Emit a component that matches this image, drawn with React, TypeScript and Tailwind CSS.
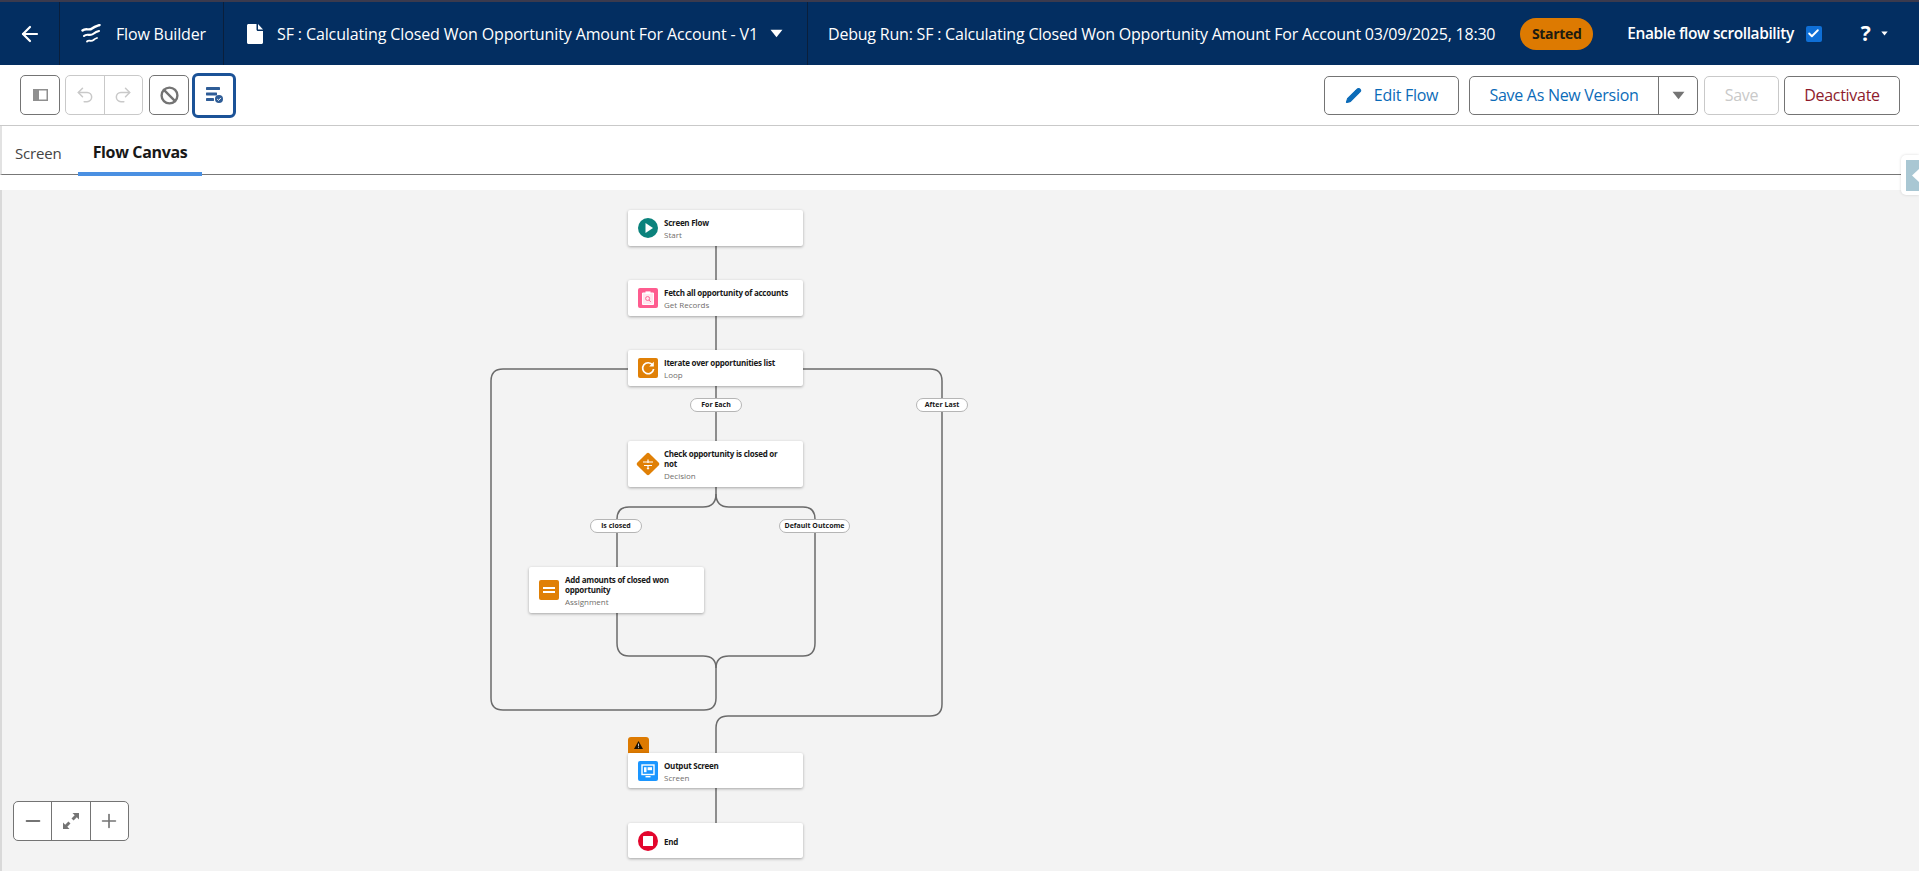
import { ArrowLeft, Ban, Pencil, Redo2, Undo2, Check, Plus, Minus } from 'lucide-react'
import type { ReactNode } from 'react'

function FlowLogo() {
  return (
    <svg width="20" height="20" viewBox="0 0 20 20" fill="none" stroke="white" strokeLinecap="round">
      <path d="M1.5 6.5C5 3.5 8 7 11 4.5C13.5 2.5 15.5 2 18.5 1" strokeWidth="2.4" />
      <path d="M3 12C6 9 9 12.5 12 10C14 8.5 15.5 7.5 18 7" strokeWidth="2.1" />
      <path d="M6 17.5C8 15.5 10 18 12.5 16C13.5 15 14.5 14.5 16 14" strokeWidth="1.8" />
    </svg>
  )
}

function FileIcon() {
  return (
    <svg width="16" height="20" viewBox="0 0 16 20" fill="white">
      <path d="M1.5 0H9.5V5.5C9.5 6.3 10.2 7 11 7H16V18.5C16 19.3 15.3 20 14.5 20H1.5C0.7 20 0 19.3 0 18.5V1.5C0 0.7 0.7 0 1.5 0Z" />
      <path d="M11 0L16 5.5H11Z" />
    </svg>
  )
}

function SidebarIcon() {
  return (
    <svg width="15" height="12" viewBox="0 0 15 12">
      <rect x="0" y="0" width="15" height="12" fill="#8f8f8f" />
      <rect x="6" y="1.5" width="7.5" height="9" fill="white" />
    </svg>
  )
}

function ChecklistIcon() {
  return (
    <svg width="17" height="16" viewBox="0 0 17 16" fill="#2f5d97">
      <rect x="0" y="0" width="14" height="3" rx="0.4" />
      <rect x="0" y="5.5" width="11" height="3" rx="0.4" />
      <rect x="0" y="11" width="8" height="3" rx="0.4" />
      <circle cx="13" cy="12" r="4" />
      <path d="M11.2 12.1L12.6 13.4L14.9 10.9" fill="none" stroke="white" strokeWidth="1" />
    </svg>
  )
}

function Caret({ className }: { className: string }) {
  return (
    <svg viewBox="0 0 12 8" className={className} fill="currentColor">
      <path d="M0.5 0.5H11.5L6 7.5Z" />
    </svg>
  )
}

function ToolButton({ children, className }: { children: ReactNode; className: string }) {
  return (
    <div className={`flex items-center justify-center bg-white ${className}`}>
      {children}
    </div>
  )
}

function FlowCard({ pos, title, sub, icon }: { pos: string; title: string; sub?: string; icon: ReactNode }) {
  return (
    <div className={`absolute flex items-center rounded-[2px] bg-white pl-[10px] pr-3 shadow-[0_1px_3px_rgba(0,0,0,0.32)] ${pos}`}>
      <div className="flex w-5 shrink-0 justify-center">{icon}</div>
      <div className="ml-[6px] min-w-0 pt-[2px]">
        <div className="text-[8px] font-bold leading-[10px] tracking-[-0.25px] text-[#181818]">{title}</div>
        {sub && <div className="mt-[2px] text-[8px] leading-[10px] text-[#706e6b]">{sub}</div>}
      </div>
    </div>
  )
}

function Pill({ pos, label }: { pos: string; label: string }) {
  return (
    <div className={`absolute flex h-[14px] items-center justify-center rounded-full border border-[#b5b5b5] bg-white text-[7px] font-bold text-[#181818] ${pos}`}>
      {label}
    </div>
  )
}

const startIcon = (
  <svg width="20" height="20" viewBox="0 0 20 20">
    <circle cx="10" cy="10" r="10" fill="#0b827c" />
    <path d="M7.5 5L15 10L7.5 15Z" fill="white" />
  </svg>
)

const getRecordsIcon = (
  <svg width="20" height="20" viewBox="0 0 20 20">
    <rect width="20" height="20" rx="2" fill="#fe5c8f" />
    <path d="M4.5 5H15.5V16.5H4.5Z" fill="#ffe6ee" stroke="white" strokeWidth="1" />
    <rect x="7.5" y="3.4" width="5" height="2.6" fill="white" />
    <circle cx="9.6" cy="10.5" r="2" fill="none" stroke="#fe5c8f" strokeWidth="0.9" />
    <path d="M11 12L12.8 14" stroke="#fe5c8f" strokeWidth="0.9" />
  </svg>
)

const loopIcon = (
  <svg width="20" height="20" viewBox="0 0 20 20">
    <rect width="20" height="20" rx="2" fill="#e08006" />
    <path d="M14.6 7A5.5 5.5 0 1 0 15.6 11" fill="none" stroke="white" strokeWidth="1.7" />
    <path d="M15.8 3.8V8.4H11.2Z" fill="white" />
  </svg>
)

const decisionIcon = (
  <svg width="24" height="24" viewBox="0 0 24 24" className="shrink-0">
    <rect x="3.5" y="3.5" width="17" height="17" rx="2" transform="rotate(45 12 12)" fill="#e08006" />
    <path d="M7 10H17M8 13.5H16M12 7.5V11M12 14V16" stroke="white" strokeWidth="1.2" fill="none" />
    <path d="M10.5 16H13.5L12 17.8Z" fill="white" />
  </svg>
)

const assignIcon = (
  <svg width="20" height="20" viewBox="0 0 20 20">
    <rect width="20" height="20" rx="2" fill="#e08006" />
    <rect x="4" y="7" width="12" height="2" fill="white" />
    <rect x="4" y="11" width="12" height="2" fill="white" />
  </svg>
)

const screenIcon = (
  <svg width="20" height="20" viewBox="0 0 20 20">
    <rect width="20" height="20" rx="2" fill="#1b96ff" />
    <rect x="4" y="4" width="12" height="9.5" fill="none" stroke="white" strokeWidth="1.4" />
    <rect x="6" y="6.2" width="2.5" height="5" fill="white" />
    <rect x="9.6" y="6.2" width="4.4" height="3" fill="white" />
    <rect x="7.5" y="15" width="5" height="1.4" fill="white" />
  </svg>
)

const endIcon = (
  <svg width="20" height="20" viewBox="0 0 20 20">
    <circle cx="10" cy="10" r="10" fill="#e3062d" />
    <rect x="5" y="5" width="10" height="10" rx="0.5" fill="white" />
  </svg>
)

function FlowEdges() {
  return (
    <svg className="absolute inset-0" width="1919" height="681" viewBox="0 190 1919 681" fill="none" stroke="#6b6b6b" strokeWidth="1.5">
      <path d="M716 246V280" />
      <path d="M716 316V350" />
      <path d="M716 386V441" />
      <path d="M628 369H503Q491 369 491 381V698Q491 710 503 710H704Q716 710 716 698V668" />
      <path d="M803 369H930Q942 369 942 381V704Q942 716 930 716H728Q716 716 716 728V753" />
      <path d="M716 487V494Q716 507 703 507H629Q617 507 617 519V567" />
      <path d="M716 494Q716 507 729 507H803Q815 507 815 519V643Q815 656 803 656H729Q716 656 716 668" />
      <path d="M617 613V643Q617 656 629 656H703Q716 656 716 668" />
      <path d="M716 788V823" />
    </svg>
  )
}

export default function App() {
  return (
    <div className="flex h-[871px] w-full flex-col overflow-hidden bg-white font-['Open_Sans',sans-serif]">
      <div className="h-[2px] shrink-0 bg-[#3b3a4d]" />

      {/* top nav */}
      <div className="flex h-[63px] shrink-0 items-stretch bg-[#032e61] text-[16px] tracking-[-0.18px] text-white">
        <div className="flex w-[60px] items-center justify-center border-r border-[#0a1f3c]">
          <ArrowLeft size={24} strokeWidth={2.2} />
        </div>
        <div className="flex w-[164px] items-center border-r border-[#0a1f3c] pl-[21px]">
          <FlowLogo />
          <span className="ml-[15px]">Flow Builder</span>
        </div>
        <div className="flex w-[584px] items-center border-r border-[#0a1f3c] pl-[23px]">
          <FileIcon />
          <span className="ml-[14px] whitespace-nowrap tracking-[-0.12px]">SF : Calculating Closed Won Opportunity Amount For Account - V1</span>
          <Caret className="ml-[12px] h-[9px] w-[13px]" />
        </div>
        <div className="flex flex-1 items-center pl-5">
          <span className="whitespace-nowrap tracking-[-0.21px]">Debug Run: SF : Calculating Closed Won Opportunity Amount For Account 03/09/2025, 18:30</span>
          <span className="ml-[25px] flex h-8 w-[73px] items-center justify-center rounded-full bg-[#dd7a01] text-[14px] font-bold tracking-[-0.3px] text-[#201b10]">Started</span>
          <span className="ml-[34px] whitespace-nowrap text-[15.5px] font-semibold tracking-[-0.4px]">Enable flow scrollability</span>
          <span className="ml-[12px] flex h-4 w-4 items-center justify-center rounded-[2px] bg-[#0f6fd6]">
            <Check size={13} strokeWidth={3.5} />
          </span>
          <span className="ml-[39px] text-[21px] font-bold leading-none">?</span>
          <Caret className="ml-[10px] h-[5px] w-[7px]" />
        </div>
      </div>

      {/* toolbar */}
      <div className="flex h-[61px] shrink-0 items-center justify-between border-b border-[#c9c9c9] pl-5 pr-[19px]">
        <div className="flex items-center">
          <ToolButton className="h-10 w-10 rounded-[5px] border border-[#747474]">
            <SidebarIcon />
          </ToolButton>
          <div className="ml-[5px] flex h-10 w-[78px] rounded-[5px] border border-[#c9c9c9] text-[#c9c9c9]">
            <div className="flex flex-1 items-center justify-center border-r border-[#c9c9c9]">
              <Undo2 size={20} strokeWidth={1.8} />
            </div>
            <div className="flex flex-1 items-center justify-center">
              <Redo2 size={20} strokeWidth={1.8} />
            </div>
          </div>
          <ToolButton className="ml-[6px] h-10 w-10 rounded-[5px] border border-[#747474] text-[#747474]">
            <Ban size={19} strokeWidth={3} />
          </ToolButton>
          <ToolButton className="ml-[3px] h-[45px] w-11 rounded-[6px] border-[3px] border-[#1b5297]">
            <ChecklistIcon />
          </ToolButton>
        </div>
        <div className="flex items-center text-[16px] tracking-[-0.28px]">
          <div className="flex h-[39px] w-[135px] items-center justify-center rounded-[5px] border border-[#747474] text-[#0b6bb8]">
            <Pencil size={17} fill="currentColor" strokeWidth={1.5} />
            <span className="ml-[12px]">Edit Flow</span>
          </div>
          <div className="ml-[10px] flex h-[39px] w-[229px] rounded-[5px] border border-[#747474] text-[#0b6bb8]">
            <div className="flex flex-1 items-center justify-center border-r border-[#747474]">Save As New Version</div>
            <div className="flex w-[38px] items-center justify-center text-[#747474]">
              <Caret className="h-[9px] w-[13px]" />
            </div>
          </div>
          <div className="ml-[6px] flex h-[39px] w-[75px] items-center justify-center rounded-[5px] border border-[#c9c9c9] text-[#c9c9c9]">Save</div>
          <div className="ml-[5px] flex h-[39px] w-[116px] items-center justify-center rounded-[5px] border border-[#747474] text-[#8e1b2c]">Deactivate</div>
        </div>
      </div>

      {/* tabs */}
      <div className="relative flex h-[49px] shrink-0 items-stretch border-b border-l-2 border-b-[#777777] border-l-[#e2e2e2] text-[15px]">
        <div className="flex w-[76px] items-center pl-[13px] pt-[6px] tracking-[-0.2px] text-[#444444]">Screen</div>
        <div className="-mb-[2px] flex w-[124px] items-center justify-center border-b-[4px] border-[#4a90e2] pt-[6px] text-[16px] font-bold tracking-[-0.35px] text-[#181818]">Flow Canvas</div>
      </div>
      <div className="h-[15px] shrink-0 bg-white" />

      {/* canvas */}
      <div className="relative flex-1 border-l-2 border-[#d9d9d9] bg-[#f3f3f3]">
        <div className="absolute inset-y-0 -left-[2px] w-[1919px]">
          <FlowEdges />
          <FlowCard pos="left-[628px] top-[20px] h-[36px] w-[175px]" title="Screen Flow" sub="Start" icon={startIcon} />
          <FlowCard pos="left-[628px] top-[90px] h-[36px] w-[175px]" title="Fetch all opportunity of accounts" sub="Get Records" icon={getRecordsIcon} />
          <FlowCard pos="left-[628px] top-[160px] h-[36px] w-[175px]" title="Iterate over opportunities list" sub="Loop" icon={loopIcon} />
          <FlowCard pos="left-[628px] top-[251px] h-[46px] w-[175px]" title="Check opportunity is closed or not" sub="Decision" icon={decisionIcon} />
          <FlowCard pos="left-[529px] top-[377px] h-[46px] w-[175px]" title="Add amounts of closed won opportunity" sub="Assignment" icon={assignIcon} />
          <div className="absolute left-[628px] top-[547px] flex h-4 w-[21px] items-center justify-center rounded-t-[3px] bg-[#dd7a01]">
            <svg width="9" height="8" viewBox="0 0 9 8">
              <path d="M4.5 0L9 8H0Z" fill="#1a1205" />
              <path d="M4.5 2.6V5.4M4.5 6.2V7.1" stroke="white" strokeWidth="0.8" />
            </svg>
          </div>
          <FlowCard pos="left-[628px] top-[563px] h-[35px] w-[175px]" title="Output Screen" sub="Screen" icon={screenIcon} />
          <FlowCard pos="left-[628px] top-[633px] h-[35px] w-[175px]" title="End" icon={endIcon} />
          <Pill pos="left-[690px] top-[208px] w-[52px]" label="For Each" />
          <Pill pos="left-[916px] top-[208px] w-[52px]" label="After Last" />
          <Pill pos="left-[590px] top-[329px] w-[52px]" label="is closed" />
          <Pill pos="left-[779px] top-[329px] w-[71px]" label="Default Outcome" />
        </div>

        {/* zoom controls */}
        <div className="absolute bottom-[30px] left-[11px] flex h-10 w-[116px] rounded-[5px] border border-[#747474] bg-white text-[#747474]">
          <div className="flex flex-1 items-center justify-center border-r border-[#747474]">
            <Minus size={22} strokeWidth={2} />
          </div>
          <div className="flex flex-1 items-center justify-center border-r border-[#747474]">
            <svg width="18" height="18" viewBox="0 0 18 18" fill="#747474">
              <path d="M17 1V7.5L14.8 5.3L11.6 8.5L9.5 6.4L12.7 3.2L10.5 1Z" />
              <path d="M1 17V10.5L3.2 12.7L6.4 9.5L8.5 11.6L5.3 14.8L7.5 17Z" />
            </svg>
          </div>
          <div className="flex flex-1 items-center justify-center">
            <Plus size={22} strokeWidth={1.8} />
          </div>
        </div>
      </div>

      {/* collapsed side panel handle */}
      <div className="absolute right-0 top-[155px] flex h-10 w-[18px] items-center rounded-l-[5px] bg-white pl-[5px] shadow-[0_0_3px_rgba(0,0,0,0.15)]">
        <div className="flex h-[31px] w-[13px] items-center justify-end bg-[#a9c7d3]">
          <svg width="7" height="13" viewBox="0 0 7 13">
            <path d="M7 0V13L0 6.5Z" fill="white" />
          </svg>
        </div>
      </div>
    </div>
  )
}
